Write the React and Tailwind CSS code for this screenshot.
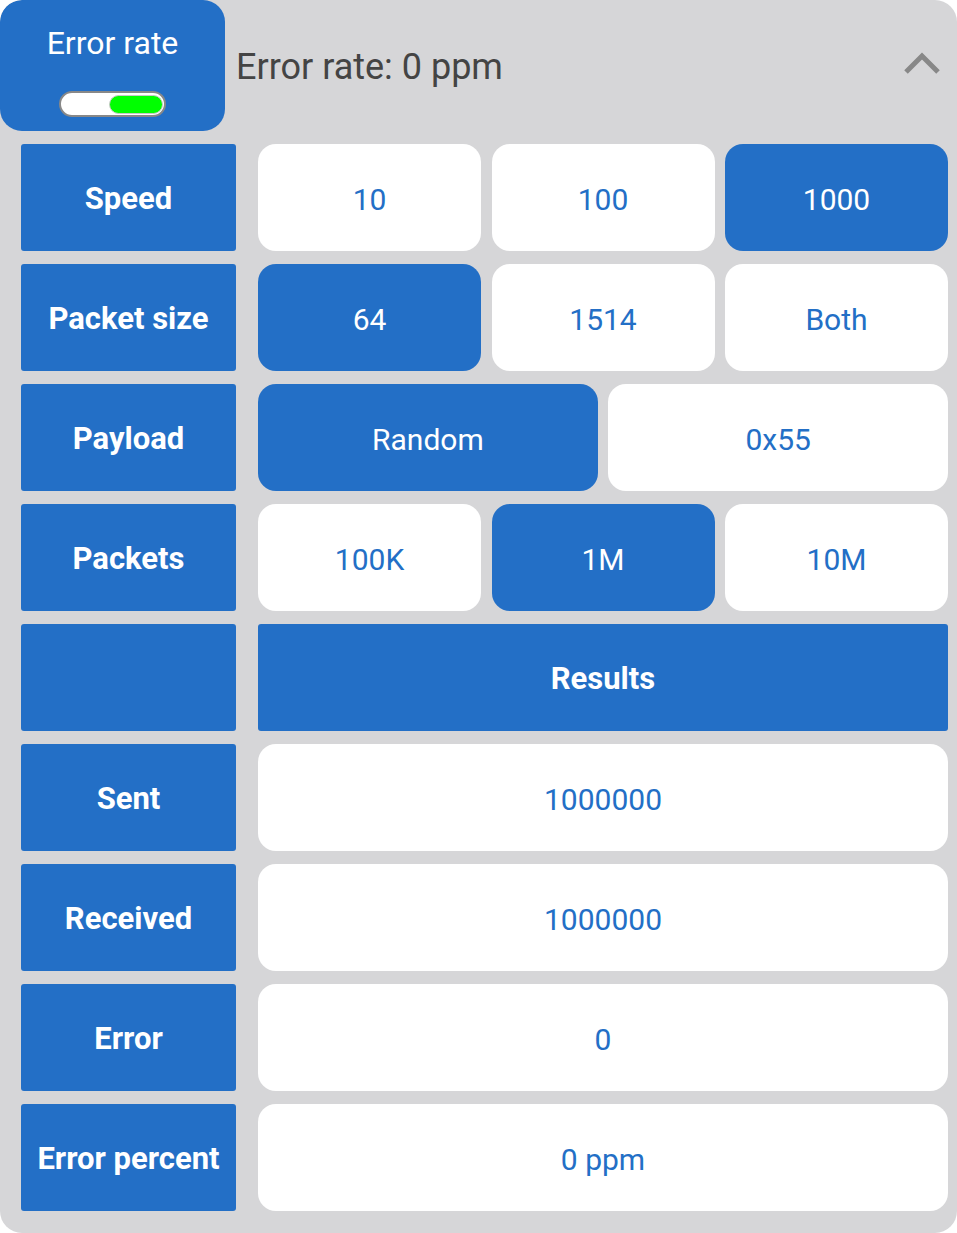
import React from "react";

const BLUE = "bg-[#236fc6]";

function Label({ children }) {
  return (
    <div className={`w-[215px] shrink-0 ${BLUE} rounded-[3px] flex items-center justify-center pt-[3px] text-white font-bold text-[31px]`}>
      {children}
    </div>
  );
}

function Opt({ children, active }) {
  return (
    <div
      className={`rounded-[18px] flex items-center justify-center pt-[3px] text-[30px] ${
        active ? "bg-[#236fc6] text-white" : "bg-white text-[#236fc6]"
      }`}
    >
      {children}
    </div>
  );
}

function OptRow({ label, options, active }) {
  const cols = options.length === 2 ? "grid-cols-2" : "grid-cols-3";
  return (
    <div className="flex h-[107px] gap-[22px]">
      <Label>{label}</Label>
      <div className={`flex-1 grid ${cols} gap-[10.5px]`}>
        {options.map((o, i) => (
          <Opt key={o} active={i === active}>
            {o}
          </Opt>
        ))}
      </div>
    </div>
  );
}

function ValRow({ label, value }) {
  return (
    <div className="flex h-[107px] gap-[22px]">
      <Label>{label}</Label>
      <div className="flex-1 bg-white rounded-[18px] flex items-center justify-center pt-[3px] text-[30px] text-[#236fc6]">
        {value}
      </div>
    </div>
  );
}

export default function App() {
  return (
    <div
      className="w-[957px] h-[1233px] bg-[#d6d6d8] rounded-[22px] overflow-hidden"
      style={{ fontFamily: "Roboto, 'Liberation Sans', sans-serif" }}
    >
      <div className="flex h-[131px] items-center">
        <div className={`w-[225px] h-[131px] ${BLUE} rounded-[22px] flex flex-col items-center pt-[24px]`}>
          <div className="text-white text-[32px] leading-[38px]">Error rate</div>
          <div className="mt-[29px] w-[107px] h-[26px] rounded-full bg-white border-2 border-[#888] flex items-center justify-end pr-[1px]">
            <div className="w-[54px] h-[19px] rounded-full bg-[#00ff00] border-[1.5px] border-[#c8c8c8]" />
          </div>
        </div>
        <div className="flex-1 pl-[11px] pt-[3px] text-[36px] text-[#444444]">Error rate: 0 ppm</div>
        <svg width="40" height="30" viewBox="0 0 40 30" className="mr-[14px] mb-[6px]">
          <polyline points="3,24 19,8 35,24" fill="none" stroke="#888888" strokeWidth="5" />
        </svg>
      </div>
      <div className="flex flex-col gap-[13px] mt-[13px] pl-[21px] pr-[9px]">
        <OptRow label="Speed" options={["10", "100", "1000"]} active={2} />
        <OptRow label="Packet size" options={["64", "1514", "Both"]} active={0} />
        <OptRow label="Payload" options={["Random", "0x55"]} active={0} />
        <OptRow label="Packets" options={["100K", "1M", "10M"]} active={1} />
        <div className="flex h-[107px] gap-[22px]">
          <Label></Label>
          <div className={`flex-1 ${BLUE} rounded-[3px] flex items-center justify-center pt-[3px] text-white font-bold text-[31px]`}>
            Results
          </div>
        </div>
        <ValRow label="Sent" value="1000000" />
        <ValRow label="Received" value="1000000" />
        <ValRow label="Error" value="0" />
        <ValRow label="Error percent" value="0 ppm" />
      </div>
    </div>
  );
}
